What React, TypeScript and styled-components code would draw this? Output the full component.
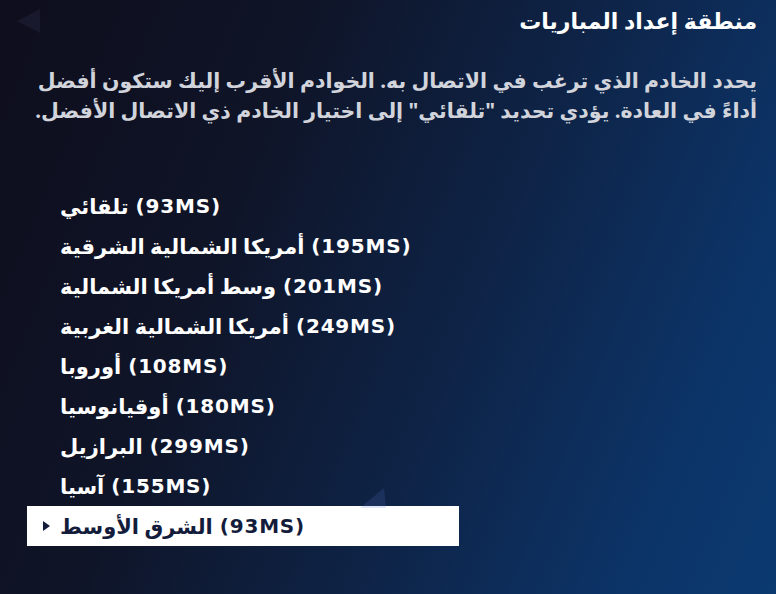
import * as React from 'react'
import styled, { createGlobalStyle } from 'styled-components'

type Region = {
    name: string
    ping: number
}

const regions: Region[] = [
    { name: 'تلقائي', ping: 93 },
    { name: 'أمريكا الشمالية الشرقية', ping: 195 },
    { name: 'وسط أمريكا الشمالية', ping: 201 },
    { name: 'أمريكا الشمالية الغربية', ping: 249 },
    { name: 'أوروبا', ping: 108 },
    { name: 'أوقيانوسيا', ping: 180 },
    { name: 'البرازيل', ping: 299 },
    { name: 'آسيا', ping: 155 },
    { name: 'الشرق الأوسط', ping: 93 },
]

const GlobalStyle = createGlobalStyle`
    html, body {
        margin: 0;
        padding: 0;
        background: #0e0e1d;
    }
    * {
        box-sizing: border-box;
    }
`

const Page = styled.div`
    position: relative;
    width: 776px;
    height: 594px;
    overflow: hidden;
    direction: rtl;
    display: flex;
    flex-direction: column;
    font-family: "Noto Sans", "DejaVu Sans", sans-serif;
    font-weight: 700;
    color: #fff;
    background: linear-gradient(112deg, #0e0e1d 0%, #0f1427 30%, #0e2448 60%, #0c3468 85%, #0b3a70 100%);
`
const Title = styled.h1`
    margin: 0;
    padding: 5px 19px 0 0;
    font-size: 22px;
    line-height: 30px;
    font-weight: 700;
    color: #fff;
`
const Description = styled.p`
    margin: 30px 0 0;
    padding: 0 19px 0 20px;
    font-size: 20.5px;
    line-height: 30px;
    color: #d2d4dc;
`
const List = styled.ul`
    list-style: none;
    margin: 61px 0 0 27px;
    padding: 0;
    width: 432px;
    align-self: flex-end;
`
const Row = styled.li<{ $selected?: boolean }>`
    direction: ltr;
    height: 40px;
    display: flex;
    align-items: center;
    padding-left: 16px;
    font-size: 21px;
    background: ${p => (p.$selected ? '#fff' : 'transparent')};
    color: ${p => (p.$selected ? '#141c3c' : '#fff')};
`
const Name = styled.span`
    direction: rtl;
`
const Ping = styled.span`
    margin-left: 7px;
    font-family: "DejaVu Sans", sans-serif;
    font-size: 20px;
    letter-spacing: 0.8px;
`
const Arrow = styled.span<{ $visible?: boolean }>`
    width: 0;
    height: 0;
    margin-right: 10px;
    border-top: 5px solid transparent;
    border-bottom: 5px solid transparent;
    border-left: 7px solid #141c3c;
    visibility: ${p => (p.$visible ? 'visible' : 'hidden')};
`
const Decor = styled.svg`
    position: absolute;
    pointer-events: none;
`

export default function App() {
    const selected = regions.length - 1
    return (
        <>
            <GlobalStyle />
            <Page>
                <Decor width="30" height="30" viewBox="0 0 30 30" style={{ left: 12, top: 6 }}>
                    <polygon points="5,15 28,3 28,27" fill="rgba(130,130,190,0.09)" />
                </Decor>
                <Decor width="30" height="24" viewBox="0 0 30 24" style={{ left: 358, top: 484 }}>
                    <polygon points="2,24 26,4 28,24" fill="rgba(90,120,200,0.18)" />
                </Decor>
                <Title>منطقة إعداد المباريات</Title>
                <Description>
                    يحدد الخادم الذي ترغب في الاتصال به. الخوادم الأقرب إليك ستكون أفضل أداءً في العادة. يؤدي تحديد "تلقائي" إلى اختيار الخادم ذي الاتصال الأفضل.
                </Description>
                <List>
                    {regions.map((r, i) => (
                        <Row key={r.name} $selected={i === selected}>
                            <Arrow $visible={i === selected} />
                            <Name>{r.name}</Name>
                            <Ping>({r.ping}MS)</Ping>
                        </Row>
                    ))}
                </List>
            </Page>
        </>
    )
}
